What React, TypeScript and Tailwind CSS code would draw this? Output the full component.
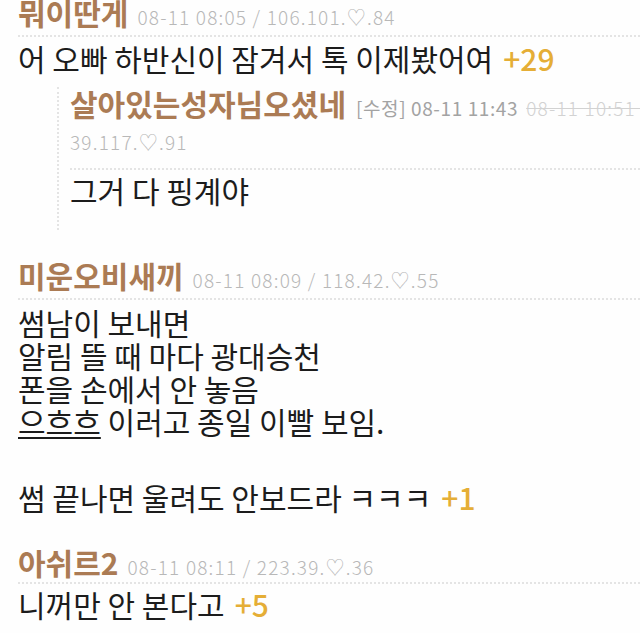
import React from 'react'

const FONT = '"Noto Sans CJK KR", "Noto Sans", sans-serif'

function Meta({ children }: { children: React.ReactNode }) {
  return (
    <span className="ml-[9px] text-[19px] font-light tracking-[1.2px] text-[#b8b8b8]">{children}</span>
  )
}

function Nick({ children }: { children: React.ReactNode }) {
  return <span className="text-[30px] font-bold text-[#ab7b54]">{children}</span>
}

function Plus({ n }: { n: number }) {
  return <span className="ml-[10px] font-medium text-[#e5ae36]">+{n}</span>
}

export default function App() {
  return (
    <div
      className="w-[640px] h-[633px] overflow-hidden bg-[#fefefe] text-[#1c1c1c]"
      style={{ fontFamily: FONT }}
    >
      {/* comment 1 */}
      <div className="-mt-[3px] pl-[18px]">
        <div className="h-[40px] border-b-2 border-dotted border-[#e4e4e4] leading-[30px] whitespace-nowrap">
          <Nick>뭐이딴게</Nick>
          <Meta>08-11 08:05 / 106.101.♡.84</Meta>
        </div>
        <div className="pt-[4px] text-[30px] leading-[34px] whitespace-nowrap">
          어 오빠 하반신이 잠겨서 톡 이제봤어여<Plus n={29} />
        </div>

        {/* reply */}
        <div className="mt-[12px] ml-[39px] border-l-2 border-dotted border-[#e4e4e4] pl-[11px] pb-[23px]">
          <div className="border-b-2 border-dotted border-[#e4e4e4] pb-[14px]">
            <div className="leading-[32px] whitespace-nowrap overflow-hidden">
              <Nick>살아있는성자님오셨네</Nick>
              <span className="ml-[10px] text-[19px] tracking-[0.6px] text-[#a3a3a3]">[수정] 08-11 11:43</span>
              <span className="ml-[8px] text-[19px] font-light tracking-[1.2px] text-[#d2d2d2] line-through">
                08-11 10:51 /
              </span>
            </div>
            <div className="mt-[5px] text-[19px] leading-[24px] font-light tracking-[1.2px] text-[#b8b8b8]">
              39.117.♡.91
            </div>
          </div>
          <div className="pt-[3px] text-[30px] leading-[34px]">그거 다 핑계야</div>
        </div>
      </div>

      {/* comment 2 */}
      <div className="mt-[30px] pl-[18px]">
        <div className="h-[40px] border-b-2 border-dotted border-[#e4e4e4] leading-[30px] whitespace-nowrap">
          <Nick>미운오비새끼</Nick>
          <Meta>08-11 08:09 / 118.42.♡.55</Meta>
        </div>
        <div className="pt-[6px] text-[30px] leading-[33px] whitespace-nowrap">
          <div>썸남이 보내면</div>
          <div>알림 뜰 때 마다 광대승천</div>
          <div>폰을 손에서 안 놓음</div>
          <div>
            <span className="underline decoration-[1.5px] underline-offset-[3px]">으흐흐</span> 이러고 종일 이빨 보임.
          </div>
          <div className="h-[43px]" />
          <div>
            썸 끝나면 울려도 안보드라 ㅋㅋㅋ
            <Plus n={1} />
          </div>
        </div>
      </div>

      {/* comment 3 */}
      <div className="mt-[33px] pl-[18px]">
        <div className="h-[37px] border-b-2 border-dotted border-[#e4e4e4] leading-[30px] whitespace-nowrap">
          <Nick>아쉬르2</Nick>
          <Meta>08-11 08:11 / 223.39.♡.36</Meta>
        </div>
        <div className="pt-[3px] text-[30px] leading-[34px] whitespace-nowrap">
          니꺼만 안 본다고<Plus n={5} />
        </div>
      </div>
    </div>
  )
}
